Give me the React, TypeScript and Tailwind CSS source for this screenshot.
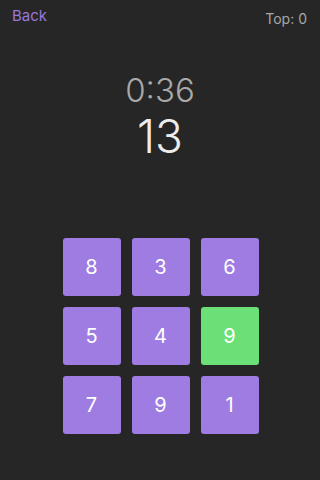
import { useState } from 'react';

const tiles = [8, 3, 6, 5, 4, 9, 7, 9, 1];

const App = () => {
  const [picked] = useState(5);

  return (
    <div className="w-[320px] h-[480px] bg-[#262626] flex flex-col" style={{ fontFamily: 'Inter, "Liberation Sans", sans-serif' }}>
      <div className="flex items-start justify-between px-3 pt-[6px]">
        <button className="text-[15px] text-[#9a78d8] leading-5">Back</button>
        <span className="text-[14px] text-[#a8a8a8] leading-5 mt-[3px] mr-[1px]">Top: 0</span>
      </div>

      <div className="flex flex-col items-center mt-[41px]">
        <div className="text-[33px] leading-[40px] text-[#a9a9a9] font-light">0:36</div>
        <div className="text-[46px] leading-[52px] text-[#ededed] font-light">13</div>
      </div>

      <div className="grid grid-cols-[58px_58px_58px] gap-x-[11px] gap-y-[11px] justify-center mt-[76px] ml-[1px]">
        {tiles.map((n, i) => (
          <div
            key={i}
            className={`h-[58px] rounded-[3px] flex items-center justify-center text-[20px] text-white ${i === picked ? 'bg-[#6ae076]' : 'bg-[#9e7ce2]'}`}
          >
            {n}
          </div>
        ))}
      </div>
    </div>
  );
};

export default App;
